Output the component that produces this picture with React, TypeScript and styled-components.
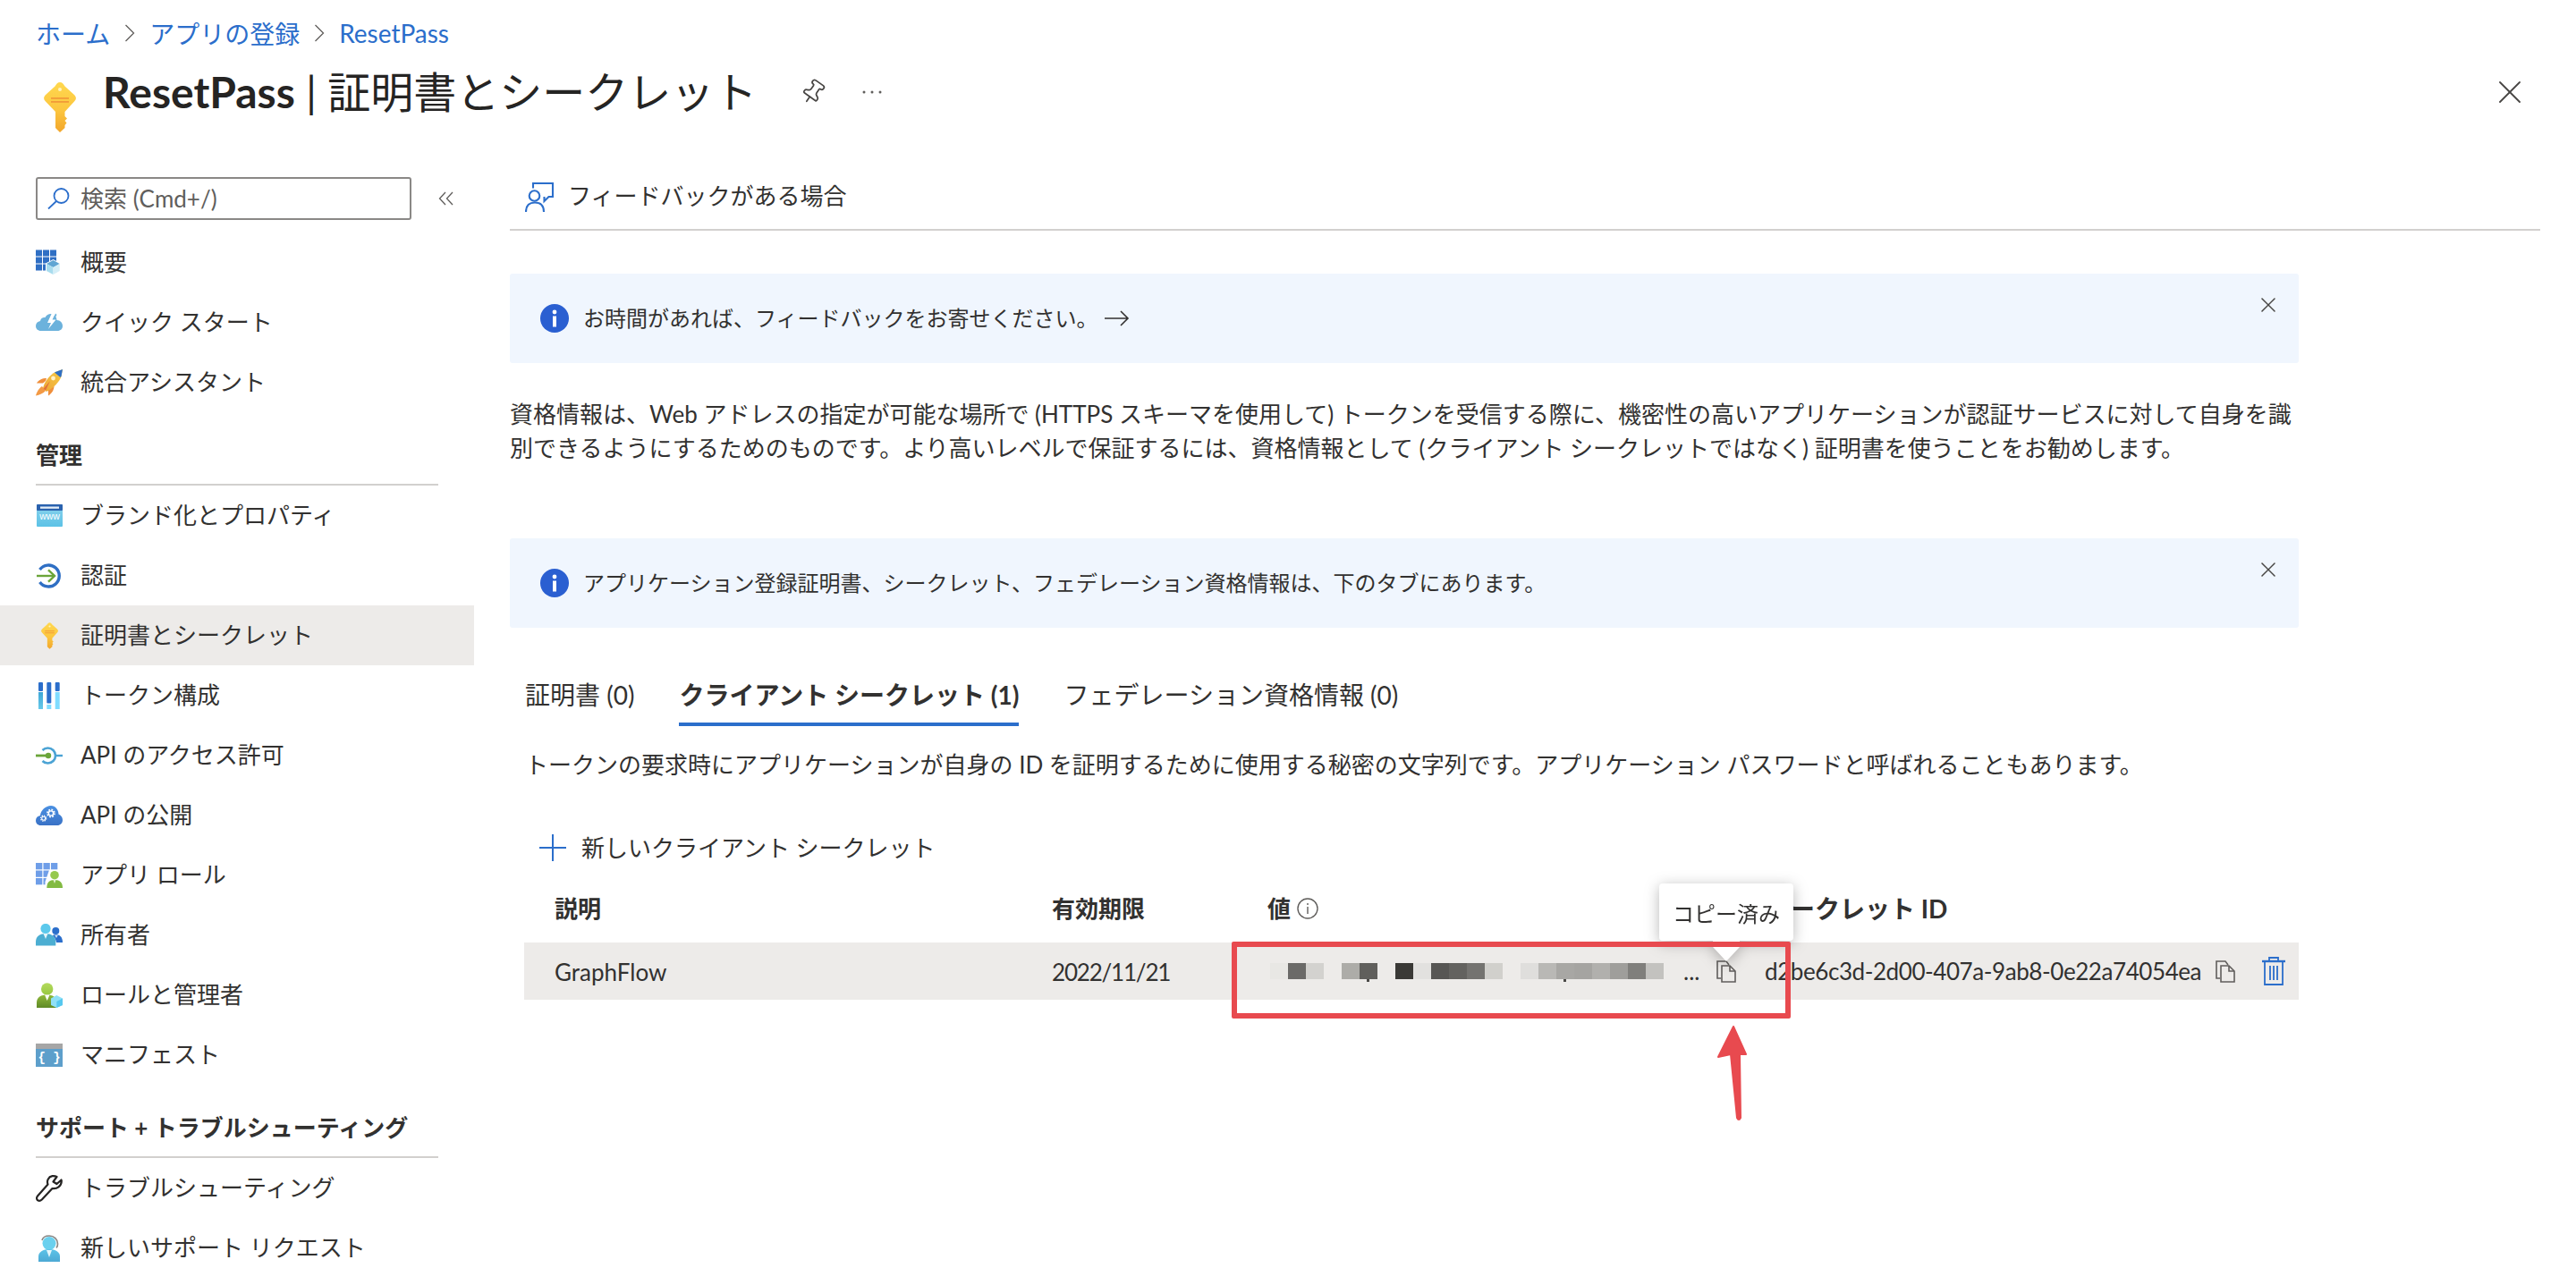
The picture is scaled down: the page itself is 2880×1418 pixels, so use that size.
import React from 'react';
import styled, { createGlobalStyle } from 'styled-components';
import { Pin, X } from 'lucide-react';

const GlobalStyle = createGlobalStyle`
  html, body {
    margin: 0;
    padding: 0;
    background: #fff;
  }
  body {
    font-family: Lato, "Noto Sans CJK JP", sans-serif;
    font-size: 26px;
    color: #323130;
  }
`;

const Page = styled.div`
  width: 2880px;
  height: 1418px;
  overflow: hidden;
  display: flex;
  flex-direction: column;
`;

const Header = styled.header`
  height: 198px;
  flex: none;
  padding: 18px 40px 0;
  box-sizing: border-box;
`;

const Breadcrumb = styled.nav`
  display: flex;
  align-items: center;
  height: 38px;
  gap: 16px;
  font-size: 28px;
  color: #2b6ecb;
`;

const TitleRow = styled.div`
  display: flex;
  align-items: center;
  height: 76px;
  margin-top: 9px;
`;

const TitleKey = styled.span`
  display: flex;
  margin: 34px 30px 0 9px;
`;

const Title = styled.h1`
  margin: 0;
  font-size: 48px;
  font-weight: 400;
  line-height: 76px;
  white-space: nowrap;
  color: #252423;
  b {
    font-weight: 700;
  }
`;

const TitleAction = styled.span`
  display: flex;
  align-items: center;
  color: #484644;
  margin-left: ${p => p.$gap}px;
`;

const CloseBtn = styled.span`
  display: flex;
  margin-left: auto;
  color: #484644;
  margin-right: 12px;
`;

const Body = styled.div`
  flex: 1;
  display: flex;
  min-height: 0;
`;

const Sidebar = styled.aside`
  width: 530px;
  flex: none;
`;

const SearchRow = styled.div`
  display: flex;
  align-items: center;
  padding-left: 40px;
  gap: 30px;
  margin-bottom: 14px;
`;

const SearchBox = styled.div`
  width: 420px;
  height: 48px;
  box-sizing: border-box;
  border: 2px solid #8a8886;
  border-radius: 3px;
  display: flex;
  align-items: center;
  gap: 12px;
  padding-left: 11px;
  color: #605e5c;
`;

const SearchText = styled.span`
  margin-bottom: 3px;
`;

const NavRow = styled.div`
  height: 67px;
  display: flex;
  align-items: center;
  gap: 20px;
  padding-left: 40px;
  background: ${p => (p.$active ? '#edebe9' : 'transparent')};
  white-space: nowrap;
`;

const NavIcon = styled.span`
  width: 30px;
  height: 30px;
  display: flex;
  align-items: center;
  justify-content: center;
  flex: none;
`;

const NavLabel = styled.span`
  margin-bottom: 4px;
`;

const NavHeading = styled.div`
  height: 82px;
  box-sizing: border-box;
  margin: 0 40px;
  display: flex;
  align-items: flex-end;
  padding-bottom: 17px;
  border-bottom: 2px solid #d2d0ce;
  font-weight: 700;
  line-height: 30px;
`;

const Main = styled.main`
  flex: 1;
  min-width: 0;
  padding: 0 40px 0 40px;
`;

const CommandBar = styled.div`
  height: 60px;
  box-sizing: border-box;
  display: flex;
  align-items: flex-start;
  gap: 16px;
  padding: 6px 0 0 17px;
  border-bottom: 2px solid #d2d0ce;
  line-height: 30px;
`;

const Content = styled.div`
  width: 2000px;
`;

const Banner = styled.div`
  position: relative;
  height: 100px;
  margin-top: ${p => p.$top}px;
  background: #f0f6fe;
  border-radius: 3px;
  display: flex;
  align-items: center;
  gap: 16px;
  padding-left: 34px;
  font-size: 24px;
`;

const BannerText = styled.span`
  margin-bottom: 3px;
`;

const BannerArrow = styled.svg`
  margin-left: -9px;
`;

const BannerClose = styled.span`
  position: absolute;
  top: 21px;
  right: 20px;
  display: flex;
  color: #484644;
`;

const Paragraph = styled.p`
  margin: 38px 0 0;
  line-height: 38px;
`;

const Tabs = styled.div`
  display: flex;
  gap: 50px;
  margin-top: 56px;
  padding-left: 17px;
`;

const Tab = styled.div`
  font-size: 28px;
  line-height: 38px;
  padding-bottom: 12px;
  border-bottom: 4px solid ${p => (p.$active ? '#2b6ecb' : 'transparent')};
  font-weight: ${p => (p.$active ? 700 : 400)};
  white-space: nowrap;
`;

const Description = styled.p`
  margin: 24px 0 0;
  padding-left: 17px;
  line-height: 38px;
  white-space: nowrap;
`;

const AddButton = styled.div`
  display: flex;
  align-items: center;
  gap: 17px;
  height: 40px;
  margin-top: 54px;
  padding-left: 33px;
`;

const AddLabel = styled.span`
  margin-bottom: 3px;
`;

const TableGrid = `
  display: grid;
  grid-template-columns: 556px 241px 556px 1fr;
  margin-left: 16px;
  padding-left: 34px;
  align-items: center;
`;

const TableHead = styled.div`
  ${TableGrid}
  height: 38px;
  margin-top: 30px;
  margin-bottom: 18px;
  font-weight: 700;
  white-space: nowrap;
`;

const HeadCell = styled.div`
  display: flex;
  align-items: center;
  gap: 7px;
  font-size: ${p => p.$size || 26}px;
  line-height: 34px;
  margin-bottom: 2px;
`;

const TableRow = styled.div`
  ${TableGrid}
  position: relative;
  height: 64px;
  background: #edebe9;
  white-space: nowrap;
`;

const Cell = styled.div`
  display: flex;
  align-items: center;
`;

const RowText = styled.span`
  margin-top: 2px;
  letter-spacing: ${p => p.$track || 0}px;
`;

const Mosaic = styled.div`
  display: flex;
  height: 18px;
  margin: 0 22px 0 3px;
`;

const Tile = styled.span`
  position: relative;
  width: 20px;
  height: 18px;
  flex: none;
  background: ${p => p.$c};
  ${p =>
    p.$tail &&
    `&::after {
      content: '';
      position: absolute;
      left: 8px;
      top: 18px;
      width: 3px;
      height: 3px;
      background: #4a4947;
    }`}
`;

const Dots = styled.span`
  width: 37px;
  flex: none;
`;

const IdText = styled.span`
  width: 504px;
  flex: none;
  letter-spacing: -0.42px;
`;

const TrashBtn = styled.span`
  display: flex;
  margin-left: 30px;
`;

const Tooltip = styled.div`
  position: absolute;
  left: 1269px;
  top: -66px;
  width: 150px;
  height: 64px;
  background: #fff;
  border-radius: 4px;
  display: flex;
  align-items: center;
  justify-content: center;
  font-size: 24px;
  font-weight: 400;
  filter: drop-shadow(0 3px 8px rgba(0, 0, 0, 0.28));
  &::after {
    content: '';
    position: absolute;
    left: 60px;
    top: 64px;
    width: 30px;
    height: 23px;
    background: #fff;
    clip-path: polygon(0 0, 100% 0, 100% 30%, 50% 100%, 0 30%);
  }
`;

const RedBox = styled.div`
  position: absolute;
  left: 791px;
  top: -1px;
  width: 625px;
  height: 86px;
  box-sizing: border-box;
  border: 6px solid #e84a4f;
  border-radius: 2px;
`;

const RedArrow = styled.svg`
  position: absolute;
  left: 1333px;
  top: 92px;
`;

const Link = styled.span``;

const Blue = '#2b6ecb';

const ChevronSep = () => (
  <svg width="12" height="20" viewBox="0 0 12 20" fill="none" stroke="#605e5c" strokeWidth="1.3">
    <path d="M1.5 1 L10.5 10 L1.5 19" />
  </svg>
);

const KeyIcon = ({ w, h, id }: { w: number; h: number; id: string }) => (
  <svg width={w} height={h} viewBox="0 0 36 56">
    <defs>
      <linearGradient id={id} x1="0" y1="0" x2="0" y2="1">
        <stop offset="0" stopColor="#ffd84f" />
        <stop offset="0.55" stopColor="#fcc63f" />
        <stop offset="1" stopColor="#f2a62b" />
      </linearGradient>
    </defs>
    <path
      d="M18 0 C20.5 0 22 2 23.5 4.5 L34 14 C36.5 16.5 36.5 19 34 21.5 L23.5 33 L23.5 38 L26 40.5 L23.5 43 L25.5 45.5 L23.5 48 L23.5 51 L18 56 L13 51 L13 33 L2 21.5 C-0.5 19 -0.5 16.5 2 14 L12.5 4.5 C14 2 15.5 0 18 0 Z"
      fill={`url(#${id})`}
    />
    <rect x="8" y="17" width="20" height="1.8" fill="#f29b38" />
    <rect x="8" y="21" width="20" height="1.8" fill="#f29b38" />
    <circle cx="18" cy="8" r="2" fill="#fff3bf" />
  </svg>
);

const SearchIcon = () => (
  <svg width="25" height="24" viewBox="0 0 25 24" fill="none" stroke={Blue} strokeWidth="1.8">
    <circle cx="15.5" cy="9" r="8" />
    <path d="M10 15 L1 23.5" />
  </svg>
);

const CollapseIcon = () => (
  <svg width="18" height="16" viewBox="0 0 18 16" fill="none" stroke="#605e5c" strokeWidth="1.3">
    <path d="M8 1 L1.5 8 L8 15" />
    <path d="M16 1 L9.5 8 L16 15" />
  </svg>
);

const FeedbackIcon = () => (
  <svg width="32" height="33" viewBox="0 0 32 33" fill="none" stroke={Blue} strokeWidth="2.1">
    <path d="M9 6.5 V1 H31 V16 H26.5 L21.5 21 V16" />
    <circle cx="10.5" cy="15" r="5.8" />
    <path d="M1 33 C1 26 5 22.5 11 22.5 C17 22.5 21 26 21 33" />
  </svg>
);

const InfoIcon = () => (
  <svg width="32" height="32" viewBox="0 0 32 32" style={{ flex: 'none' }}>
    <circle cx="16" cy="16" r="16" fill="#2a5fd1" />
    <circle cx="16" cy="9" r="2.4" fill="#fff" />
    <rect x="14" y="13.5" width="4" height="12" fill="#fff" />
  </svg>
);

const OverviewIcon = () => (
  <svg width="30" height="30" viewBox="0 0 30 30">
    <g fill="#2f6fc4">
      {[0, 8, 16].map(x =>
        [0.5, 8.5, 16.5].map(y => <rect key={`${x}${y}`} x={x} y={y} width="7" height="7" />)
      )}
    </g>
    <path d="M19.5 11 L27.7 15.5 V24.5 L19.5 29 L11 24.5 V15.5 Z" fill="#fff" />
    <path d="M19.5 12 L26.7 16 L19.5 20 L12 16 Z" fill="#5fa5d3" />
    <path d="M12 16 L19.5 20 V28 L12 24 Z" fill="#a8dcee" />
    <path d="M26.7 16 L19.5 20 V28 L26.7 24 Z" fill="#d4eef7" />
  </svg>
);

const QuickIcon = () => (
  <svg width="30" height="30" viewBox="0 0 30 30">
    <path d="M6 24 C2 24 0 21.5 0 18.5 C0 15.5 2 13.5 5 13 C5.5 10 8 8.5 10.5 9 C12 6 15 4.5 18 5 C21 5.5 23.5 9 23.5 12 C27.5 12 30 15 30 18.5 C30 21.5 28 24 24 24 Z" fill="#6cb2dc" />
    <path d="M22 4.5 L18 4 L13 15 H17 L14 22 L22.5 11.5 H18.5 Z" fill="#fff" />
    <path d="M22 4.5 L19.5 10.5 H21 L23.5 6 Z" fill="#6cb2dc" />
  </svg>
);

const RocketIcon = () => (
  <svg width="30" height="30" viewBox="0 0 30 30">
    <defs>
      <linearGradient id="rocketBody" x1="1" y1="0" x2="0" y2="1">
        <stop offset="0" stopColor="#f7cb45" />
        <stop offset="1" stopColor="#eda636" />
      </linearGradient>
    </defs>
    <path d="M12 10 C7 10 3 12 1 15.5 L8 15.5 L11 13 Z" fill="#f08f3c" />
    <path d="M20.5 18.5 C20.5 23 18 27 14 29.5 L14 23 Z" fill="#f08f3c" />
    <path d="M7 19 C3.5 21 1 25.5 0 29.5 C4 28.5 8.5 27 11 24 Z" fill="#f39a45" />
    <path d="M30 0 L22 3 C16 6 10 13 8 21 L12 25 C20 21 27 13 28.5 8 Z" fill="url(#rocketBody)" />
    <path d="M30 0 L22 3 L21 3.5 L27.5 9 L28.5 8 Z" fill="#2f6fc4" />
    <path d="M8.5 22 L16 13 L11 23.5 Z" fill="#e2703a" />
    <circle cx="19.5" cy="10" r="2.4" fill="#fff2c8" />
  </svg>
);

const BrandIcon = () => (
  <svg width="29" height="25" viewBox="0 0 29 25">
    <defs>
      <linearGradient id="brand" x1="0" y1="0" x2="0" y2="1">
        <stop offset="0" stopColor="#8bd2ec" />
        <stop offset="1" stopColor="#5cc2e6" />
      </linearGradient>
    </defs>
    <rect width="29" height="25" rx="1" fill="url(#brand)" />
    <rect width="29" height="7" rx="1" fill="#2a62ae" />
    <rect x="4" y="2.5" width="21" height="2.3" fill="#e4eef8" />
    <text x="14.5" y="17" fontSize="10.5" fill="#fff" textAnchor="middle" fontFamily="Liberation Sans">www</text>
  </svg>
);

const AuthIcon = () => (
  <svg width="30" height="30" viewBox="0 0 30 30" fill="none">
    <path d="M4.5 8 A12 12 0 1 1 4.5 22" stroke="#2f6fc4" strokeWidth="3.4" />
    <path d="M1 15 H21" stroke="#6ba53a" strokeWidth="2.4" />
    <path d="M14 8.3 L21 15 L14 21.7" stroke="#6ba53a" strokeWidth="2.4" />
  </svg>
);

const TokenIcon = () => (
  <svg width="24" height="30" viewBox="0 0 24 30">
    <defs>
      <linearGradient id="tokenLeft" x1="0" y1="0" x2="0" y2="1">
        <stop offset="0" stopColor="#3fa7d6" />
        <stop offset="1" stopColor="#66c9ea" />
      </linearGradient>
    </defs>
    <rect x="0" y="0" width="5" height="10" rx="1" fill="#2b6ecb" />
    <rect x="0" y="11" width="5" height="19" fill="url(#tokenLeft)" />
    <rect x="9.3" y="0" width="5" height="23.5" rx="1" fill="#2b6ecb" />
    <rect x="9.3" y="25" width="5" height="5" fill="#7fdcff" />
    <rect x="18.7" y="0" width="5" height="10" rx="1" fill="#2b6ecb" />
    <rect x="18.7" y="11" width="5" height="19" fill="#7fdcff" />
  </svg>
);

const ApiPermIcon = () => (
  <svg width="30" height="22" viewBox="0 0 30 22" fill="none">
    <path d="M7.5 5 A8.5 8.5 0 1 1 7.5 17" stroke="#4ba3d4" strokeWidth="2.6" />
    <path d="M22 11 H30" stroke="#4ba3d4" strokeWidth="2.4" />
    <path d="M0 11 H14" stroke="#6ba53a" strokeWidth="2.8" />
    <circle cx="14" cy="11" r="3.2" fill="#6ba53a" />
  </svg>
);

const Gear = ({ cx, cy, r }: { cx: number; cy: number; r: number }) => (
  <>
    <circle cx={cx} cy={cy} r={r} fill="none" stroke="#fff" strokeWidth={r * 0.45} strokeDasharray={`${r * 0.45} ${r * 0.33}`} />
    <circle cx={cx} cy={cy} r={r * 0.65} fill="none" stroke="#fff" strokeWidth={r * 0.35} />
  </>
);

const ApiPublishIcon = () => (
  <svg width="30" height="22" viewBox="0 0 30 22">
    <defs>
      <linearGradient id="cloudBlue" x1="0" y1="0" x2="0" y2="1">
        <stop offset="0" stopColor="#4a90e2" />
        <stop offset="1" stopColor="#3a72c6" />
      </linearGradient>
    </defs>
    <path d="M5.5 22 C2 22 0 19.5 0 16.5 C0 13.5 2 11.5 5 11 C5.5 5 11 0 17 0 C22 0 25.5 5 25.5 9.5 C28 10.5 30 13 30 16 C30 19.5 27.5 22 24 22 Z" fill="url(#cloudBlue)" />
    <Gear cx={17} cy={8.5} r={4} />
    <Gear cx={8.7} cy={14.2} r={3} />
  </svg>
);

const AppRoleIcon = () => (
  <svg width="30" height="28" viewBox="0 0 30 28">
    <g fill="#6f9ee8">
      {[0, 8.5, 17].map(x =>
        [0, 8.5, 17].map(y => <rect key={`${x}${y}`} x={x} y={y} width="7.3" height="7.3" />)
      )}
    </g>
    <path d="M10.5 28 V21 L15 8 H27 L30 20 V28 Z" fill="#fff" />
    <circle cx="21" cy="13.7" r="4.8" fill="#96c94e" />
    <path d="M12.3 28 C12.3 22 15 19 21 19 C27 19 30 22 30 28 Z" fill="#82ba42" />
    <path d="M19.5 19 H22.5 L21 23 Z" fill="#e4f2cf" />
  </svg>
);

const OwnersIcon = () => (
  <svg width="30" height="25" viewBox="0 0 30 25">
    <circle cx="22.3" cy="8" r="4" fill="#2b6ecb" />
    <path d="M18 21 V15 C18 13 20 12 22.3 12 C26 12 30 14 30 21 Z" fill="#2b6ecb" />
    <path d="M25 12.5 L23 16 L21 12.5 Z" fill="#cfe0f6" />
    <path d="M0 25 C0 15 5 10 11 10 C17 10 23.5 15 23.5 25 Z" fill="#fff" />
    <circle cx="11" cy="5.5" r="6.5" fill="#fff" />
    <circle cx="11" cy="5.5" r="5.6" fill="#5cc9ec" />
    <path d="M0 24.5 V20 C0 14 5 11 11 11 C17 11 22.3 14 22.3 20 V24.5 Z" fill="#4caed2" />
    <path d="M8.5 11 H13.5 L11 17 Z" fill="#e6f6fb" />
  </svg>
);

const RoleAdminIcon = () => (
  <svg width="30" height="28" viewBox="0 0 30 28">
    <defs>
      <linearGradient id="adminHead" x1="0" y1="0" x2="0" y2="1">
        <stop offset="0" stopColor="#b4da5c" />
        <stop offset="1" stopColor="#97c842" />
      </linearGradient>
      <linearGradient id="adminBody" x1="0" y1="0" x2="0" y2="1">
        <stop offset="0" stopColor="#8fb93a" />
        <stop offset="1" stopColor="#5f8a26" />
      </linearGradient>
    </defs>
    <circle cx="12.7" cy="7" r="6.7" fill="url(#adminHead)" />
    <path d="M1 28 V22 C1 16 6 13.5 12.7 13.5 C19 13.5 23 16 23 22 V28 Z" fill="url(#adminBody)" />
    <path d="M10 13.5 H15.5 L12.7 20 Z" fill="#fff" />
    <path d="M23.3 14 L30 17.5 V25 L23.3 28 L17 25 V17.5 Z" fill="#8fe0f7" />
    <path d="M23.3 21 L30 17.5 V25 L23.3 28 Z" fill="#56c8ef" />
  </svg>
);

const ManifestIcon = () => (
  <svg width="30" height="26" viewBox="0 0 30 26">
    <rect width="30" height="26" fill="#5d9fcb" />
    <rect width="30" height="6" fill="#a6a6a6" />
    <text x="15" y="20" fontSize="14" fontWeight="700" fill="#fff" textAnchor="middle" fontFamily="Liberation Mono">{'{ }'}</text>
  </svg>
);

const WrenchIcon = () => (
  <svg width="30" height="30" viewBox="0 0 30 30" fill="none" stroke="#252423" strokeWidth="2.2" strokeLinejoin="round">
    <path d="M18.5 1.2 C14 2 12 6.5 13.5 10.5 L1.8 23.8 C0.3 25.8 1.2 28.2 3.2 28.8 C4.8 29.2 5.8 28.5 6.8 27.5 L18.5 15 C23.5 16 28.8 12.5 28.8 6.5 L28.5 5.5 L23.5 10 L19.5 7.5 L23.5 2 C22 1.2 20.5 1 18.5 1.2 Z" />
  </svg>
);

const SupportIcon = () => (
  <svg width="24" height="30" viewBox="0 0 24 30" fill="none">
    <defs>
      <linearGradient id="supportBody" x1="0" y1="0" x2="0" y2="1">
        <stop offset="0" stopColor="#5cc3e8" />
        <stop offset="1" stopColor="#4da9d4" />
      </linearGradient>
    </defs>
    <circle cx="12" cy="9.5" r="7.5" fill="#6ad0ee" />
    <path d="M4 6 C5 2 8.5 1 12 1 C17.5 1 21.5 5 21.5 10 C21.5 12 21 13.5 20 14.5" stroke="#8a8886" strokeWidth="1.7" />
    <path d="M0 30 V24 C0 19.5 5 16 12 16 C19 16 24 19.5 24 24 V30 Z" fill="url(#supportBody)" />
    <path d="M9 17 H15 L12 25 Z" fill="#e6f6fb" />
  </svg>
);

const CopyIcon = () => (
  <svg width="22" height="25" viewBox="0 0 22 25" fill="none" stroke="#605e5c" strokeWidth="1.6" style={{ flex: 'none' }}>
    <path d="M5 20 H1 V1 H11 L14 5" />
    <path d="M6 6 H15 L21 12 V24 H6 Z" />
    <path d="M15 6 V12 H21" />
  </svg>
);

const TrashIcon = () => (
  <svg width="26" height="32" viewBox="0 0 26 32" fill="none" stroke={Blue} strokeWidth="1.8">
    <path d="M0 5 H26" strokeWidth="2.4" />
    <path d="M8 5 V1 H18 V5" />
    <path d="M3 5 V31 H23 V5" />
    <path d="M9 10 V26 M13 10 V26 M17 10 V26" />
  </svg>
);

const PlusIcon = () => (
  <svg width="30" height="30" viewBox="0 0 30 30" stroke={Blue} strokeWidth="2" style={{ flex: 'none' }}>
    <path d="M15 0 V30 M0 15 H30" />
  </svg>
);

const navTop = [
  { label: '概要', icon: <OverviewIcon /> },
  { label: 'クイック スタート', icon: <QuickIcon /> },
  { label: '統合アシスタント', icon: <RocketIcon /> },
];

const navManage = [
  { label: 'ブランド化とプロパティ', icon: <BrandIcon /> },
  { label: '認証', icon: <AuthIcon /> },
  { label: '証明書とシークレット', icon: <KeyIcon w={19} h={30} id="keySmall" />, active: true },
  { label: 'トークン構成', icon: <TokenIcon /> },
  { label: 'API のアクセス許可', icon: <ApiPermIcon /> },
  { label: 'API の公開', icon: <ApiPublishIcon /> },
  { label: 'アプリ ロール', icon: <AppRoleIcon /> },
  { label: '所有者', icon: <OwnersIcon /> },
  { label: 'ロールと管理者', icon: <RoleAdminIcon /> },
  { label: 'マニフェスト', icon: <ManifestIcon /> },
];

const navSupport = [
  { label: 'トラブルシューティング', icon: <WrenchIcon /> },
  { label: '新しいサポート リクエスト', icon: <SupportIcon /> },
];

// pixelated secret value, one tile per entry
const tiles = [
  '#e8e7e4', '#6b6a68', '#d3d2cf', 'transparent', '#adaca8', '#605f5c', 'transparent',
  '#3a3936', '#e2e1df', '#575654', '#63625f', '#747370', '#d1d0cc', 'transparent',
  '#dfdedc', '#b9b8b5', '#a8a7a4', '#a5a4a1', '#b1b0ad', '#9f9e9b', '#807f7c', '#c3c2bf',
];

const NavList = ({ items }: { items: { label: string; icon: React.ReactNode; active?: boolean }[] }) => (
  <>
    {items.map(item => (
      <NavRow key={item.label} $active={item.active}>
        <NavIcon>{item.icon}</NavIcon>
        <NavLabel>{item.label}</NavLabel>
      </NavRow>
    ))}
  </>
);

const App: React.FC = () => {
  return (
    <Page>
      <GlobalStyle />
      <Header>
        <Breadcrumb>
          <Link>ホーム</Link>
          <ChevronSep />
          <Link>アプリの登録</Link>
          <ChevronSep />
          <Link>ResetPass</Link>
        </Breadcrumb>
        <TitleRow>
          <TitleKey>
            <KeyIcon w={36} h={56} id="keyLarge" />
          </TitleKey>
          <Title>
            <b>ResetPass</b> | 証明書とシークレット
          </Title>
          <TitleAction $gap={48}>
            <Pin size={30} strokeWidth={1.4} style={{ transform: 'rotate(35deg)' }} />
          </TitleAction>
          <TitleAction $gap={40}>
            <svg width="22" height="4" viewBox="0 0 22 4" fill="#605e5c">
              <circle cx="2" cy="2" r="1.5" />
              <circle cx="11" cy="2" r="1.5" />
              <circle cx="20" cy="2" r="1.5" />
            </svg>
          </TitleAction>
          <CloseBtn>
            <X size={44} strokeWidth={1} />
          </CloseBtn>
        </TitleRow>
      </Header>
      <Body>
        <Sidebar>
          <SearchRow>
            <SearchBox>
              <SearchIcon />
              <SearchText>検索 (Cmd+/)</SearchText>
            </SearchBox>
            <CollapseIcon />
          </SearchRow>
          <NavList items={navTop} />
          <NavHeading>管理</NavHeading>
          <NavList items={navManage} />
          <NavHeading>サポート + トラブルシューティング</NavHeading>
          <NavList items={navSupport} />
        </Sidebar>
        <Main>
          <CommandBar>
            <FeedbackIcon />
            フィードバックがある場合
          </CommandBar>
          <Content>
            <Banner $top={48}>
              <InfoIcon />
              <BannerText>お時間があれば、フィードバックをお寄せください。</BannerText>
              <BannerArrow width="28" height="18" viewBox="0 0 28 18" fill="none" stroke="#323130" strokeWidth="1.6">
                <path d="M0 9 H26 M18 1 L26 9 L18 17" />
              </BannerArrow>
              <BannerClose>
                <X size={28} strokeWidth={1.3} />
              </BannerClose>
            </Banner>
            <Paragraph>
              資格情報は、Web アドレスの指定が可能な場所で (HTTPS スキーマを使用して) トークンを受信する際に、機密性の高いアプリケーションが認証サービスに対して自身を識別できるようにするためのものです。より高いレベルで保証するには、資格情報として (クライアント シークレットではなく) 証明書を使うことをお勧めします。
            </Paragraph>
            <Banner $top={82}>
              <InfoIcon />
              <BannerText>アプリケーション登録証明書、シークレット、フェデレーション資格情報は、下のタブにあります。</BannerText>
              <BannerClose>
                <X size={28} strokeWidth={1.3} />
              </BannerClose>
            </Banner>
            <Tabs>
              <Tab>証明書 (0)</Tab>
              <Tab $active>クライアント シークレット (1)</Tab>
              <Tab>フェデレーション資格情報 (0)</Tab>
            </Tabs>
            <Description>
              トークンの要求時にアプリケーションが自身の ID を証明するために使用する秘密の文字列です。アプリケーション パスワードと呼ばれることもあります。
            </Description>
            <AddButton>
              <PlusIcon />
              <AddLabel>新しいクライアント シークレット</AddLabel>
            </AddButton>
            <TableHead>
              <HeadCell>説明</HeadCell>
              <HeadCell>有効期限</HeadCell>
              <HeadCell>
                値
                <svg width="24" height="24" viewBox="0 0 24 24" fill="none" stroke="#605e5c" strokeWidth="1.4">
                  <circle cx="12" cy="12" r="11" />
                  <path d="M12 10 V18 M12 6 V8" />
                </svg>
              </HeadCell>
              <HeadCell $size={28}>シークレット ID</HeadCell>
            </TableHead>
            <TableRow>
              <Cell>
                <RowText>GraphFlow</RowText>
              </Cell>
              <Cell>
                <RowText $track={-1.2}>2022/11/21</RowText>
              </Cell>
              <Cell>
                <Mosaic>
                  {tiles.map((c, i) => (
                    <Tile key={i} $c={c} $tail={i === 5 || i === 16} />
                  ))}
                </Mosaic>
                <Dots>...</Dots>
                <CopyIcon />
              </Cell>
              <Cell>
                <IdText>d2be6c3d-2d00-407a-9ab8-0e22a74054ea</IdText>
                <CopyIcon />
                <TrashBtn>
                  <TrashIcon />
                </TrashBtn>
              </Cell>
              <Tooltip>コピー済み</Tooltip>
              <RedBox />
              <RedArrow width="34" height="108" viewBox="0 0 34 108">
                <path d="M19 2 L33 33 L26 33 L27 104 Q25 108 23 104 L16 33 L2 36 Z" fill="#e84a4f" stroke="#e84a4f" strokeWidth="2" strokeLinejoin="round" />
              </RedArrow>
            </TableRow>
          </Content>
        </Main>
      </Body>
    </Page>
  );
};

export default App;
